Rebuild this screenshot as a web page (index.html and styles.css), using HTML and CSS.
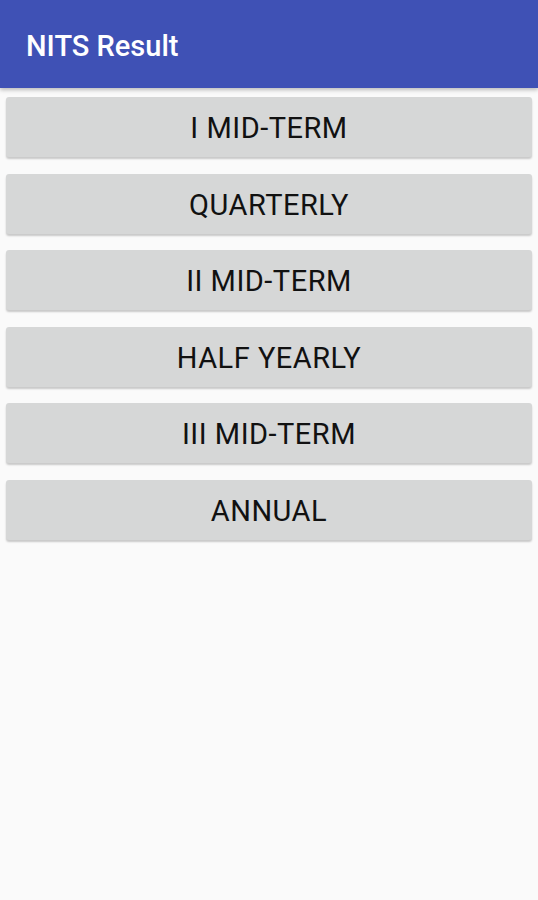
FILE: index.html
```html
<!DOCTYPE html>
<html lang="en">
<head>
    <meta charset="UTF-8">
    <meta name="viewport" content="width=device-width, initial-scale=1.0">
    <title>NITS Result</title>
    <link rel="stylesheet" href="styles.css">
</head>
<body>
    <div class="toolbar">
        <h1 class="title">NITS Result</h1>
    </div>
    <div class="exams">
        <button class="exam-btn">I MID-TERM</button>
        <button class="exam-btn">QUARTERLY</button>
        <button class="exam-btn">II MID-TERM</button>
        <button class="exam-btn">HALF YEARLY</button>
        <button class="exam-btn">III MID-TERM</button>
        <button class="exam-btn">ANNUAL</button>
    </div>
</body>
</html>
```
FILE: styles.css
```css
body {
    margin: 0;
    padding: 0;
    min-height: 100vh;
    background-color: #fafafa;
    font-family: Roboto, "Noto Sans", sans-serif;
}
.toolbar {
    height: 88px;
    background-color: #3f51b5;
    display: flex;
    align-items: center;
    padding: 4px 0 0 26px;
    box-sizing: border-box;
    box-shadow: 0 2px 4px rgba(0, 0, 0, 0.25);
}
.title {
    margin: 0;
    color: white;
    font-size: 29px;
    font-weight: 500;
}
.exams {
    display: flex;
    flex-direction: column;
    gap: 16.5px;
    padding: 9px 6px;
}
.exam-btn {
    height: 60px;
    padding-top: 3px;
    border: none;
    border-radius: 3px;
    background-color: #d6d7d7;
    color: #111;
    font-family: Roboto, "Noto Sans", sans-serif;
    font-size: 29px;
    letter-spacing: 0.5px;
    box-shadow: 0 2px 2px rgba(0, 0, 0, 0.2);
    cursor: pointer;
}
```
